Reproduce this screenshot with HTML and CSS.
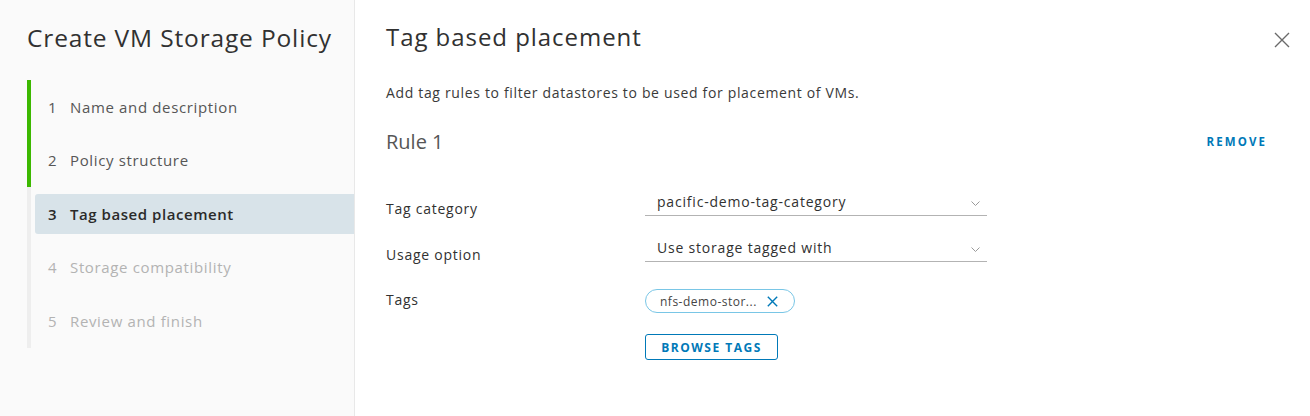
FILE: index.html
```html
<!DOCTYPE html>
<html>
<head>
<meta charset="utf-8">
<link rel="stylesheet" href="styles.css">
</head>
<body>
<div class="wizard">
  <aside class="sidebar">
    <h2 class="wiz-title">Create VM Storage Policy</h2>
    <ol class="steps">
      <li class="step done"><div class="step-inner"><span class="num">1</span><span class="lbl">Name and description</span></div></li>
      <li class="step done"><div class="step-inner"><span class="num">2</span><span class="lbl">Policy structure</span></div></li>
      <li class="step active"><div class="step-inner"><span class="num">3</span><span class="lbl">Tag based placement</span></div></li>
      <li class="step todo"><div class="step-inner"><span class="num">4</span><span class="lbl">Storage compatibility</span></div></li>
      <li class="step todo"><div class="step-inner"><span class="num">5</span><span class="lbl">Review and finish</span></div></li>
    </ol>
  </aside>
  <main class="content">
    <button class="close" aria-label="Close">
      <svg width="16" height="16" viewBox="0 0 16 16"><path d="M1 1 L15 15 M15 1 L1 15" stroke="#6a6a6a" stroke-width="1.4" fill="none"/></svg>
    </button>
    <h1 class="page-title">Tag based placement</h1>
    <p class="desc">Add tag rules to filter datastores to be used for placement of VMs.</p>
    <div class="rule-head">
      <h3 class="rule-title">Rule 1</h3>
      <a class="link-btn">REMOVE</a>
    </div>
    <div class="form">
      <div class="row">
        <label class="lbl-col">Tag category</label>
        <div class="select">
          <span>pacific-demo-tag-category</span>
          <svg class="chev" width="9" height="5" viewBox="0 0 9 5"><path d="M0.5 0.5 L4.5 4.5 L8.5 0.5" stroke="#9a9a9a" stroke-width="1" fill="none"/></svg>
        </div>
      </div>
      <div class="row">
        <label class="lbl-col">Usage option</label>
        <div class="select">
          <span>Use storage tagged with</span>
          <svg class="chev" width="9" height="5" viewBox="0 0 9 5"><path d="M0.5 0.5 L4.5 4.5 L8.5 0.5" stroke="#9a9a9a" stroke-width="1" fill="none"/></svg>
        </div>
      </div>
      <div class="row tags-row">
        <label class="lbl-col tags-lbl">Tags</label>
        <div class="tags-col">
          <span class="chip">nfs-demo-stor...
            <svg class="chip-x" width="11" height="11" viewBox="0 0 11 11"><path d="M0.8 0.8 L10.2 10.2 M10.2 0.8 L0.8 10.2" stroke="#0079b8" stroke-width="1.4" fill="none"/></svg>
          </span>
          <button class="btn-outline">BROWSE TAGS</button>
        </div>
      </div>
    </div>
  </main>
</div>
</body>
</html>
```

FILE: styles.css
```css
* { box-sizing: border-box; }
html, body { margin: 0; padding: 0; }
body {
  width: 1310px;
  height: 416px;
  overflow: hidden;
  background: #ffffff;
  font-family: "Open Sans", "Liberation Sans", sans-serif;
  color: #313131;
}
.wizard {
  display: flex;
  height: 416px;
}
.sidebar {
  width: 355px;
  flex: none;
  background: #fafafa;
  border-right: 1px solid #e8e8e8;
  padding-left: 27px;
}
.wiz-title {
  margin: 20px 0 0 0;
  font-size: 24.5px;
  line-height: 36px;
  font-weight: 400;
  color: #313131;
  letter-spacing: 0.85px;
}
.steps {
  list-style: none;
  margin: 24px 0 0 0;
  padding: 0;
}
.step {
  height: 53.5px;
  border-left: 4px solid #eeeeee;
  display: flex;
  align-items: center;
  padding-left: 4px;
}
.step.done { border-left-color: #3cb800; }
.step-inner {
  flex: 1;
  height: 40px;
  display: flex;
  align-items: center;
  padding-left: 13px;
  font-size: 15px;
  letter-spacing: 0.65px;
  color: #565656;
  border-radius: 3px 0 0 3px;
}
.num { width: 22px; letter-spacing: 0; }
.step.active .step-inner {
  background: #d8e3e9;
  color: #2a2a2a;
  font-weight: 600;
  letter-spacing: 0.55px;
}
.step.todo .step-inner { color: #b3b3b3; }

.content {
  position: relative;
  flex: 1;
  padding-left: 31px;
  padding-right: 44px;
}
.close {
  position: absolute;
  top: 32px;
  right: 20px;
  border: 0;
  background: none;
  padding: 0;
  width: 16px;
  height: 16px;
  cursor: pointer;
}
.close svg { display: block; }
.page-title {
  margin: 19px 0 0 0;
  font-size: 24px;
  line-height: 36px;
  font-weight: 400;
  color: #313131;
  letter-spacing: 0.95px;
}
.desc {
  margin: 28px 0 0 0;
  font-size: 14px;
  line-height: 20px;
  color: #3a3a3a;
  letter-spacing: 0.66px;
}
.rule-head {
  margin-top: 26px;
  height: 24px;
  display: flex;
  align-items: center;
  justify-content: space-between;
}
.rule-title {
  margin: 0;
  font-size: 20px;
  font-weight: 400;
  color: #565656;
}
.link-btn {
  font-size: 11.5px;
  font-weight: 700;
  letter-spacing: 2.1px;
  color: #0079b8;
  cursor: pointer;
  margin-right: -1px;
}
.form { margin-top: 37px; }
.row {
  display: flex;
  height: 46px;
}
.lbl-col {
  width: 259px;
  flex: none;
  font-size: 14px;
  line-height: 20px;
  padding-top: 9px;
  color: #313131;
  letter-spacing: 0.75px;
}
.select {
  width: 342px;
  height: 26px;
  padding: 1px 7px 0 12px;
  border-bottom: 1px solid #b3b3b3;
  display: flex;
  align-items: center;
  justify-content: space-between;
  font-size: 14px;
  line-height: 24px;
  color: #313131;
  letter-spacing: 0.8px;
}
.select span { display: block; margin-top: -2px; }
.chev { display: block; }
.tags-row { height: auto; }
.tags-lbl { padding-top: 8px; }
.tags-col {
  display: flex;
  flex-direction: column;
  align-items: flex-start;
  padding-top: 7px;
}
.chip {
  flex: none;
  display: inline-flex;
  align-items: center;
  height: 24px;
  width: 150px;
  padding-left: 14px;
  border: 1px solid #79c6e6;
  border-radius: 12px;
  font-size: 12px;
  letter-spacing: 0.5px;
  color: #454545;
}
.chip-x { margin-left: 10px; }
.btn-outline {
  flex: none;
  margin-top: 21px;
  height: 26px;
  width: 133px;
  border: 1px solid #0079b8;
  border-radius: 3px;
  background: #fff;
  color: #0079b8;
  font-family: "Open Sans", "Liberation Sans", sans-serif;
  font-size: 12px;
  font-weight: 700;
  letter-spacing: 1.5px;
  padding: 0;
}
```
